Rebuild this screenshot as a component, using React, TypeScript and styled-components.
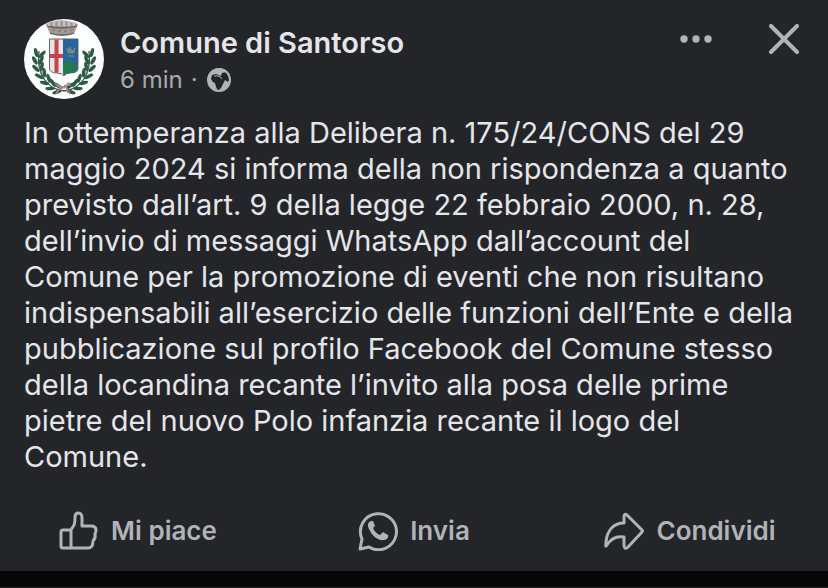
import React from "react";
import styled, { createGlobalStyle } from "styled-components";

const GlobalStyle = createGlobalStyle`
  * { box-sizing: border-box; }
  body {
    margin: 0;
    background: #242528;
    color: #e4e6eb;
    font-family: Inter, "Liberation Sans", sans-serif;
  }
`;

const Post = styled.article`
  padding: 16px 0;
  background: #242528;
`;

const Header = styled.header`
  display: flex;
  align-items: flex-start;
  gap: 16px;
  padding: 0 28px 0 24px;
`;

const Avatar = styled.svg`
  width: 80px;
  height: 80px;
  margin-top: 3px;
  flex: none;
`;

const Author = styled.div`
  flex: 1;
  min-width: 0;
  padding-top: 9px;
`;

const Name = styled.h1`
  margin: 0;
  font-size: 29px;
  line-height: 36px;
  font-weight: 600;
`;

const Meta = styled.div`
  display: flex;
  align-items: center;
  gap: 8px;
  color: #a9abaf;
  font-size: 24px;
  line-height: 38px;
`;

const Globe = styled.svg`
  width: 26px;
  height: 26px;
`;

const IconButton = styled.button`
  display: flex;
  padding: 8px 0;
  border: 0;
  background: none;
  color: #b0b3b8;
  cursor: pointer;
`;

const Tools = styled.div`
  display: flex;
  gap: 56px;
`;

const Body = styled.p`
  margin: 0;
  padding: 16px 24px 0;
  font-size: 29px;
  line-height: 36px;
`;

const Actions = styled.footer`
  display: grid;
  grid-template-columns: repeat(3, 1fr);
  padding-top: 32px;
`;

const Action = styled.button`
  display: flex;
  align-items: center;
  justify-content: center;
  gap: 12px;
  padding: 0;
  border: 0;
  background: none;
  color: #b0b3b8;
  font: 600 26px/48px Inter, "Liberation Sans", sans-serif;
  cursor: pointer;
`;

const ActionIcon = styled.svg`
  width: 40px;
  height: 40px;
  flex: none;
  fill: none;
  stroke: currentColor;
  stroke-width: 3;
  stroke-linecap: round;
  stroke-linejoin: round;
`;

const Divider = styled.div`
  height: 16px;
  background: #070708;
`;

const leaves = [
  [34, 70, 80], [28, 67, 62], [23, 62, 48], [18, 56, 34], [15, 49, 18], [14, 42, 2], [15, 35, -14],
];

function Branch() {
  return (
    <g>
      <path d="M40 72C24 70 12 57 15 32" fill="none" stroke="#315d49" strokeWidth="1.3" />
      {leaves.map(([x, y, angle]) => (
        <g key={y} transform={`translate(${x} ${y}) rotate(${-angle})`} fill="#2c5a45">
          <ellipse cx="-2.500" cy="-2" rx="1.8" ry="4.7" transform="rotate(-28)" />
          <ellipse cx="2.500" cy="-2" rx="1.8" ry="4.7" transform="rotate(28)" />
        </g>
      ))}
    </g>
  );
}

function TownCrest() {
  return (
    <Avatar viewBox="0 0 80 80" role="img" aria-label="Stemma del Comune di Santorso">
      <circle cx="40" cy="40" r="40" fill="#fcfdfd" />
      <Branch />
      <g transform="translate(80 0) scale(-1 1)"><Branch /></g>
      <path d="M22 5Q37 -2 54 5L50 15Q38 19 26 15Z" fill="#a19b98" />
      <path d="M23 7Q38 11 53 7M26 14Q38 18 50 14" stroke="#67615f" strokeWidth="1.3" fill="none" />
      <path d="M25 3v4M30 2v5M35 1v6M40 1v6M45 2v5M50 3v4" stroke="#c8c3bf" strokeWidth="2.5" />
      <path d="M28 11h3M34 12h3M40 12h3M46 11h3" stroke="#756e6b" strokeWidth="1.2" />
      <path d="M25.500 20H54V49Q54 54 46 54Q42 54 40 57Q38 54 33 54Q25.500 54 25.500 49Z" fill="#e8e5e7" stroke="#68616b" />
      <path d="M39 20H54V49Q54 54 46 54Q42 54 40 56L39 54Z" fill="#29639a" />
      <path d="M39 45Q46 38 54 47V50Q53 54 46 54Q42 54 40 56L39 54Z" fill="#23794e" />
      <path d="M30.500 20.500h4V35H39v4h-4.500v14.500h-4V39H26v-4h4.500Z" fill="#c7434d" />
      <path d="M43 29l1 3 2-4 2 4 3-3-1 5h-6ZM44 37h6M45 36v2M49 36v2" fill="#638f8a" stroke="#7c9370" strokeWidth="0.7" />
      <path d="M33 66Q39 72 41 66M41 68Q46 61 46 67M36 69l-4 6M42 68l4 7M31 65l10 4" fill="none" stroke="#a98582" strokeWidth="1.6" />
    </Avatar>
  );
}

export default function App() {
  return (
    <>
      <GlobalStyle />
      <main>
        <Post>
          <Header>
            <TownCrest />
            <Author>
              <Name>Comune di Santorso</Name>
              <Meta>
                <span>6 min</span>
                <span>·</span>
                <Globe viewBox="0 0 26 26" role="img" aria-label="Pubblico">
                  <circle cx="13" cy="13" r="11" fill="#242528" stroke="#b0b3b8" strokeWidth="2" />
                  <path d="M2 13C1 6 7 1 13 1C18 1 22 4 24 8L20 5 16 6 15 9 10 7 6 8 5 12 7 15 9 16 10 20 12 24C6 24 2 19 2 13Z" fill="#b0b3b8" />
                  <path d="M17 17L19 13 22 15 24 12C24 19 19 24 12 24L15 21Z" fill="#b0b3b8" />
                  <path d="M6 12L10 11 14 13 17 13 16 17 14 20 11 20 10 16 7 15Z" fill="#242528" />
                  <path d="M8 9Q14 8 16 12" fill="none" stroke="#b0b3b8" />
                </Globe>
              </Meta>
            </Author>
            <Tools>
              <IconButton aria-label="Altre opzioni">
                <svg width="32" height="32" viewBox="0 0 32 32" fill="currentColor">
                  <circle cx="4" cy="15" r="3.7" />
                  <circle cx="16" cy="15" r="3.7" />
                  <circle cx="28" cy="15" r="3.7" />
                </svg>
              </IconButton>
              <IconButton aria-label="Chiudi">
                <svg width="32" height="32" viewBox="0 0 32 32" fill="none" stroke="currentColor" strokeWidth="4" strokeLinecap="round">
                  <path d="M3 2L29 28M29 2L3 28" />
                </svg>
              </IconButton>
            </Tools>
          </Header>
          <Body>
            In ottemperanza alla Delibera n. 175/24/CONS del 29 maggio 2024 si informa della non rispondenza a quanto previsto dall’art. 9 della legge 22 febbraio 2000, n. 28, dell’invio di messaggi WhatsApp dall’account del Comune per la promozione di eventi che non risultano indispensabili all’esercizio delle funzioni dell’Ente e della pubblicazione sul profilo Facebook del Comune stesso della locandina recante l’invito alla posa delle prime pietre del nuovo Polo infanzia recante il logo del Comune.
          </Body>
          <Actions>
            <Action>
              <ActionIcon viewBox="2 1 40 40" aria-hidden="true">
                <path d="M14 20L17 15Q18 13 18 7Q18 3 21.500 3Q25 3 25 8V16H34Q39 16 39 20Q39 22 38 24Q39 28 36 31Q36 38 31 38H6Q4 38 4 36V22Q4 20 6 20H14V38" />
              </ActionIcon>
              Mi piace
            </Action>
            <Action>
              <ActionIcon viewBox="1 1 40 40" aria-hidden="true">
                <path d="M3 39L5 29A18 18 0 1 1 12 37Z" />
                <path d="M14 11C11 12 10 15 12 19C15 26 21 31 27 30C30 30 32 27 31 25L26 22L23 25C20 24 17 21 16 18L18 16L16 11Z" fill="currentColor" stroke="none" />
              </ActionIcon>
              Invia
            </Action>
            <Action>
              <ActionIcon viewBox="1 1 40 40" aria-hidden="true">
                <path d="M21 13V7Q21 3 24 5L39 20Q40 21 39 22L25 37Q22 40 21 36V27Q10 25 4 35C2 38 3 34 3 32C4 21 10 13 21 13Z" />
              </ActionIcon>
              Condividi
            </Action>
          </Actions>
        </Post>
        <Divider />
      </main>
    </>
  );
}
